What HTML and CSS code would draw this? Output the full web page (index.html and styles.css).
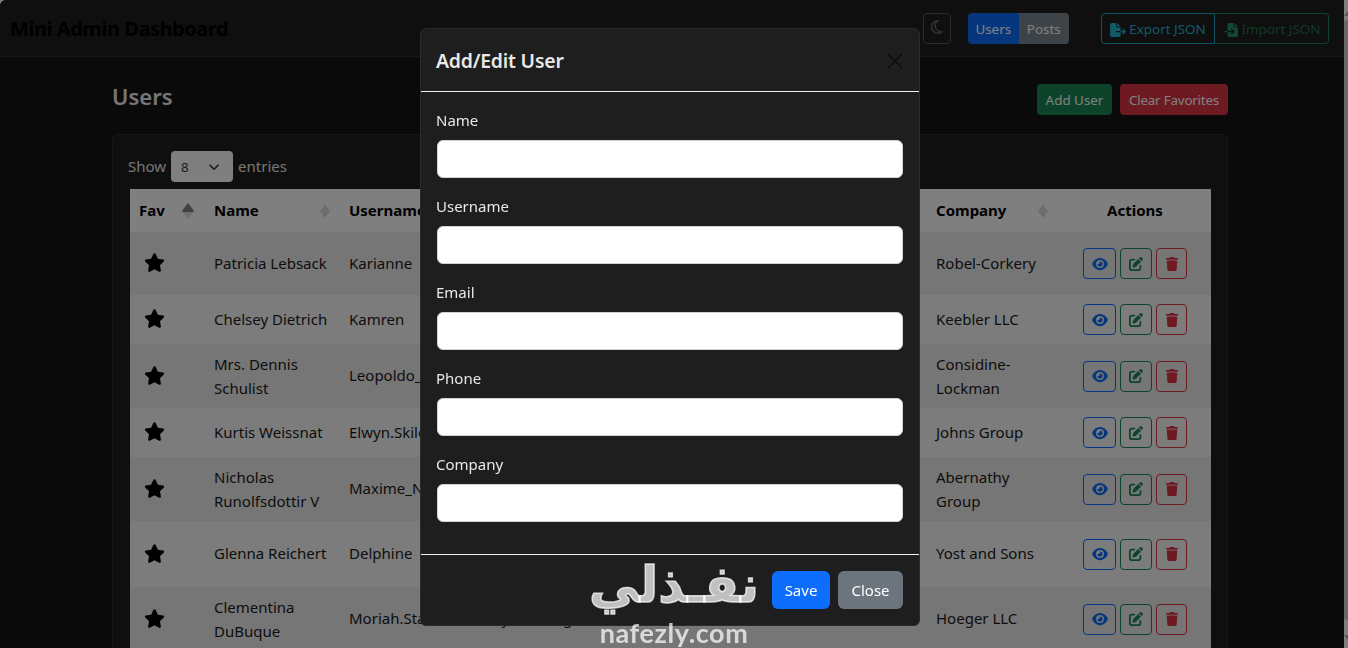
FILE: index.html
```html
<!DOCTYPE html>
<html lang="en">
<head>
    <meta charset="UTF-8">
    <meta name="viewport" content="width=device-width, initial-scale=1.0">
    <title>Mini Admin Dashboard</title>
    <link rel="stylesheet" href="styles.css">
</head>
<body>
    <svg class="sprite" xmlns="http://www.w3.org/2000/svg">
        <symbol id="i-eye" viewBox="0 0 576 512"><path d="M288 32c-80.800 0-145.500 36.800-192.600 80.600C48.600 156 17.300 208 2.500 243.700c-3.300 7.900-3.300 16.700 0 24.600C17.300 304 48.600 356 95.400 399.400C142.500 443.200 207.200 480 288 480s145.500-36.800 192.600-80.600c46.800-43.500 78.100-95.400 93-131.100c3.300-7.900 3.300-16.700 0-24.600c-14.900-35.700-46.200-87.700-93-131.100C433.500 68.800 368.800 32 288 32zM144 256a144 144 0 1 1 288 0 144 144 0 1 1 -288 0zm144-64c0 35.300-28.700 64-64 64c-7.100 0-13.900-1.200-20.300-3.300c-5.500-1.800-11.900 1.600-11.700 7.400c.3 6.900 1.300 13.800 3.200 20.700c13.700 51.200 66.400 81.600 117.600 67.900s81.600-66.400 67.900-117.600c-11.100-41.500-47.800-69.400-88.600-71.100c-5.800-.2-9.200 6.100-7.400 11.700c2.100 6.400 3.300 13.200 3.300 20.300z"/></symbol>
        <symbol id="i-edit" viewBox="0 0 512 512"><path d="M471.600 21.700c-21.900-21.900-57.300-21.900-79.200 0L362.300 51.700l97.900 97.900 30.100-30.100c21.900-21.900 21.900-57.300 0-79.200L471.600 21.700zm-299.200 220c-6.100 6.100-10.800 13.600-13.500 21.900l-29.600 88.800c-2.900 8.600-.6 18.100 5.800 24.600s15.900 8.700 24.600 5.800l88.800-29.600c8.200-2.700 15.700-7.400 21.900-13.500L437.700 172.300 339.700 74.300 172.400 241.700zM96 64C43 64 0 107 0 160V416c0 53 43 96 96 96H352c53 0 96-43 96-96V320c0-17.700-14.300-32-32-32s-32 14.300-32 32v96c0 17.700-14.300 32-32 32H96c-17.700 0-32-14.300-32-32V160c0-17.700 14.300-32 32-32h96c17.700 0 32-14.300 32-32s-14.300-32-32-32H96z"/></symbol>
        <symbol id="i-trash" viewBox="0 0 448 512"><path d="M135.200 17.700L128 32H32C14.300 32 0 46.300 0 64S14.300 96 32 96H416c17.700 0 32-14.300 32-32s-14.300-32-32-32H320l-7.200-14.300C307.400 6.800 296.300 0 284.200 0H163.800c-12.100 0-23.200 6.800-28.600 17.700zM416 128H32L53.200 467c1.600 25.300 22.600 45 47.900 45H346.900c25.300 0 46.300-19.700 47.900-45L416 128z"/></symbol>
        <symbol id="i-star" viewBox="0 0 576 512"><path d="M316.900 18C311.600 7 300.400 0 288.100 0s-23.400 7-28.800 18L195 150.300 51.400 171.500c-12 1.800-22 10.200-25.700 21.700s-.7 24.200 7.900 32.700L137.800 329 113.200 474.700c-2 12 3 24.200 12.900 31.300s23 8 33.800 2.300l128.300-68.500 128.300 68.500c10.800 5.700 23.900 4.900 33.800-2.300s14.900-19.300 12.900-31.300L438.500 329 542.700 225.900c8.600-8.500 11.700-21.200 7.900-32.700s-13.700-19.900-25.700-21.700L381.200 150.300 316.900 18z"/></symbol>
        <symbol id="i-moon" viewBox="0 0 384 512"><path d="M144.700 98.700c-21 34.100-33.100 74.300-33.100 117.300c0 98 62.800 181.400 150.400 211.700c-12.400 2.800-25.300 4.300-38.600 4.300C126.600 432 48 353.300 48 256c0-68.900 39.400-128.400 96.800-157.300zm62.100-66C91.100 41.200 0 137.900 0 256C0 379.700 100 480 223.500 480c47.800 0 92-15 128.400-40.600c1.900-1.300 3.700-2.700 5.500-4c4.800-3.600 9.400-7.400 13.900-11.400c2.700-2.400 5.300-4.800 7.900-7.300c5-4.900 6.300-12.500 3.100-18.700s-10.100-9.700-17-8.500c-3.700 .6-7.400 1.200-11.100 1.600c-5 .5-10.100 .9-15.300 1c-1.200 0-2.500 0-3.700 0c-.1 0-.2 0-.3 0c-96.800-.2-175.200-78.900-175.200-176c0-54.800 24.900-103.700 64.100-136c1-.9 2.100-1.700 3.200-2.600c4-3.200 8.200-6.200 12.500-9c3.100-2 6.300-4 9.600-5.800c6.100-3.500 9.200-10.500 7.700-17.300s-7.300-11.900-14.300-12.500c-3.600-.3-7.100-.5-10.700-.6c-2.700-.1-5.400-.1-8.100-.1c-3.300 0-6.500 .1-9.800 .2c-2.300 .1-4.600 .2-6.900 .4z"/></symbol>
        <symbol id="i-export" viewBox="0 0 576 512"><path d="M0 64C0 28.700 28.700 0 64 0H224V128c0 17.700 14.300 32 32 32H384V288H216c-13.300 0-24 10.700-24 24s10.700 24 24 24H384V448c0 35.300-28.700 64-64 64H64c-35.300 0-64-28.700-64-64V64zM384 336V288H494.100l-39-39c-9.400-9.400-9.400-24.600 0-33.900s24.600-9.400 33.900 0l80 80c9.400 9.400 9.400 24.600 0 33.900l-80 80c-9.400 9.400-24.600 9.400-33.900 0s-9.400-24.600 0-33.900l39-39H384zm0-208H256V0L384 128z"/></symbol>
        <symbol id="i-import" viewBox="0 0 512 512"><path d="M128 64c0-35.300 28.700-64 64-64H352V128c0 17.700 14.300 32 32 32H512V448c0 35.300-28.700 64-64 64H192c-35.300 0-64-28.700-64-64V336H302.100l-39 39c-9.400 9.400-9.400 24.600 0 33.900s24.600 9.400 33.900 0l80-80c9.400-9.400 9.400-24.600 0-33.900l-80-80c-9.400-9.400-24.600-9.400-33.900 0s-9.400 24.600 0 33.900l39 39H128V64zm0 224v48H24c-13.300 0-24-10.700-24-24s10.700-24 24-24H128zM512 128H384V0L512 128z"/></symbol>
    </svg>

    <div class="page">
        <nav class="navbar">
            <div class="brand">Mini Admin Dashboard</div>
            <button class="btn btn-moon"><svg class="icon"><use href="#i-moon"/></svg></button>
            <div class="btn-group tabs">
                <button class="btn btn-primary">Users</button>
                <button class="btn btn-secondary">Posts</button>
            </div>
            <div class="btn-group json">
                <button class="btn btn-export"><svg class="icon"><use href="#i-export"/></svg>Export JSON</button>
                <button class="btn btn-import"><svg class="icon"><use href="#i-import"/></svg>Import JSON</button>
            </div>
        </nav>

        <main class="content">
            <div class="page-head">
                <h2>Users</h2>
                <div class="page-actions">
                    <button class="btn btn-success">Add User</button>
                    <button class="btn btn-danger">Clear Favorites</button>
                </div>
            </div>

            <section class="card">
                <div class="length">
                    Show
                    <span class="select">8<svg class="chevron" viewBox="0 0 16 16"><path d="M2 5l6 6 6-6"/></svg></span>
                    entries
                </div>
                <table class="users">
                    <colgroup>
                        <col class="col-fav"><col class="col-name"><col class="col-user"><col class="col-email"><col class="col-phone"><col class="col-company"><col class="col-actions">
                    </colgroup>
                    <thead>
                        <tr>
                            <th>Fav<span class="sort asc"></span></th>
                            <th>Name<span class="sort"></span></th>
                            <th>Username<span class="sort"></span></th>
                            <th>Email<span class="sort"></span></th>
                            <th>Phone<span class="sort"></span></th>
                            <th>Company<span class="sort"></span></th>
                            <th class="center">Actions</th>
                        </tr>
                    </thead>
                    <tbody>
                        <tr class="row-lg">
                            <td><svg class="star"><use href="#i-star"/></svg></td>
                            <td>Patricia Lebsack</td><td>Karianne</td><td>Julianne.OConner@kory.org</td><td>493-170-9623</td><td>Robel-Corkery</td>
                            <td class="actions"><button class="act act-view"><svg><use href="#i-eye"/></svg></button><button class="act act-edit"><svg><use href="#i-edit"/></svg></button><button class="act act-del"><svg><use href="#i-trash"/></svg></button></td>
                        </tr>
                        <tr>
                            <td><svg class="star"><use href="#i-star"/></svg></td>
                            <td>Chelsey Dietrich</td><td>Kamren</td><td>Lucio_Hettinger@annie.ca</td><td>254-954-1289</td><td>Keebler LLC</td>
                            <td class="actions"><button class="act act-view"><svg><use href="#i-eye"/></svg></button><button class="act act-edit"><svg><use href="#i-edit"/></svg></button><button class="act act-del"><svg><use href="#i-trash"/></svg></button></td>
                        </tr>
                        <tr>
                            <td><svg class="star"><use href="#i-star"/></svg></td>
                            <td class="two">Mrs. Dennis Schulist</td><td>Leopoldo_Corkery</td><td>Karley_Dach@jasper.info</td><td>477-935-8478</td><td class="two">Considine-Lockman</td>
                            <td class="actions"><button class="act act-view"><svg><use href="#i-eye"/></svg></button><button class="act act-edit"><svg><use href="#i-edit"/></svg></button><button class="act act-del"><svg><use href="#i-trash"/></svg></button></td>
                        </tr>
                        <tr>
                            <td><svg class="star"><use href="#i-star"/></svg></td>
                            <td>Kurtis Weissnat</td><td>Elwyn.Skiles</td><td>Telly.Hoeger@billy.biz</td><td>210-067-6132</td><td>Johns Group</td>
                            <td class="actions"><button class="act act-view"><svg><use href="#i-eye"/></svg></button><button class="act act-edit"><svg><use href="#i-edit"/></svg></button><button class="act act-del"><svg><use href="#i-trash"/></svg></button></td>
                        </tr>
                        <tr>
                            <td><svg class="star"><use href="#i-star"/></svg></td>
                            <td class="two">Nicholas Runolfsdottir V</td><td>Maxime_Nienow</td><td>Sherwood@rosamond.me</td><td>586-493-6943</td><td class="two">Abernathy Group</td>
                            <td class="actions"><button class="act act-view"><svg><use href="#i-eye"/></svg></button><button class="act act-edit"><svg><use href="#i-edit"/></svg></button><button class="act act-del"><svg><use href="#i-trash"/></svg></button></td>
                        </tr>
                        <tr class="row-xl">
                            <td><svg class="star"><use href="#i-star"/></svg></td>
                            <td>Glenna Reichert</td><td>Delphine</td><td>Chaim_McDermott@dana.io</td><td>775-976-6794</td><td>Yost and Sons</td>
                            <td class="actions"><button class="act act-view"><svg><use href="#i-eye"/></svg></button><button class="act act-edit"><svg><use href="#i-edit"/></svg></button><button class="act act-del"><svg><use href="#i-trash"/></svg></button></td>
                        </tr>
                        <tr>
                            <td><svg class="star"><use href="#i-star"/></svg></td>
                            <td class="two">Clementina DuBuque</td><td>Moriah.Stanton</td><td>Rey.Padberg@karina.biz</td><td>024-648-3804</td><td>Hoeger LLC</td>
                            <td class="actions"><button class="act act-view"><svg><use href="#i-eye"/></svg></button><button class="act act-edit"><svg><use href="#i-edit"/></svg></button><button class="act act-del"><svg><use href="#i-trash"/></svg></button></td>
                        </tr>
                    </tbody>
                </table>
            </section>
        </main>
    </div>

    <div class="scrollbar"><span class="arrow-up"></span><span class="thumb"></span><span class="arrow-down"></span></div>

    <div class="backdrop"></div>

    <div class="modal">
        <div class="modal-header">
            <h5>Add/Edit User</h5>
            <svg class="btn-close" viewBox="0 0 16 16"><path d="M1 1l14 14M15 1L1 15"/></svg>
        </div>
        <div class="modal-body">
            <label>Name</label><input type="text">
            <label>Username</label><input type="text">
            <label>Email</label><input type="text">
            <label>Phone</label><input type="text">
            <label>Company</label><input type="text">
        </div>
        <div class="modal-footer">
            <button class="btn btn-save">Save</button>
            <button class="btn btn-close-text">Close</button>
        </div>
    </div>

    <div class="watermark">
        <div class="wm-ar" dir="rtl" lang="ar">نفـذلي</div>
        <div class="wm-en">nafezly.com</div>
    </div>
</body>
</html>
```

FILE: styles.css
```css
* {
    box-sizing: border-box;
}
html, body {
    margin: 0;
    height: 648px;
    overflow: hidden;
    background: #ffffff;
}
body {
    font-family: "Noto Sans", "Open Sans", Arial, sans-serif;
    font-size: 15px;
    line-height: 24px;
}
.sprite {
    display: none;
}
.page {
    width: 1344px;
    height: 648px;
    background: #141414;
    border-top-left-radius: 6px;
    overflow: hidden;
    color: #ececec;
}

/* top bar */
.navbar {
    display: flex;
    align-items: center;
    height: 57px;
    padding: 1px 15px 0 10px;
    background: #1e1e1e;
    border-bottom: 1px solid #2c2c2c;
}
.brand {
    flex: 1;
    color: #000000;
    font-size: 20px;
    font-weight: 700;
    letter-spacing: -0.45px;
}
.btn {
    height: 31px;
    padding: 2px 8px 0;
    border: 1px solid transparent;
    border-radius: 4px;
    font-family: inherit;
    font-size: 13.4px;
    line-height: 1;
    color: #ffffff;
    white-space: nowrap;
}
.icon {
    width: 16px;
    height: 14px;
    fill: currentColor;
}
.btn-moon {
    width: 28px;
    height: 31px;
    padding: 0;
    margin-right: 17px;
    background: none;
    border-color: #585858;
    color: #646464;
}
.btn-moon .icon {
    height: 16px;
}
.btn-group {
    display: flex;
}
.btn-group .btn:first-child {
    border-radius: 4px 0 0 4px;
}
.btn-group .btn:last-child {
    border-radius: 0 4px 4px 0;
}
.tabs {
    margin-right: 32px;
}
.tabs .btn {
    width: 50.5px;
    padding: 2px 0 0;
}
.btn-primary {
    background: #0d6efd;
}
.btn-secondary {
    background: #7d868e;
}
.btn-export, .btn-import {
    display: flex;
    align-items: center;
    justify-content: center;
    gap: 3px;
    width: 114px;
    padding: 2px 0 0;
    background: none;
}
.btn-export {
    border-color: #1ba8c4;
    color: #20b4d2;
}
.btn-import {
    border-color: #198754;
    border-left: 0;
    color: #20714e;
}
.btn-import .icon {
    color: #1f9560;
}

/* page */
.content {
    padding: 25px 116px 0 112px;
}
.page-head {
    display: flex;
    justify-content: space-between;
    height: 33px;
    margin-bottom: 19px;
}
.page-head h2 {
    margin: 0;
    font-size: 22px;
    line-height: 28px;
    font-weight: 600;
}
.page-actions {
    display: flex;
    gap: 8px;
    margin-top: 2px;
}
.btn-success {
    width: 75px;
    padding: 2px 0 0;
    background: #198754;
}
.btn-danger {
    width: 108px;
    padding: 2px 0 0;
    background: #dc3545;
    letter-spacing: -0.2px;
}
.card {
    height: 600px;
    padding: 16px;
    background: #1e1e1e;
    border: 1px solid #2c2c2c;
    border-radius: 6px;
}
.length {
    display: flex;
    align-items: flex-start;
    gap: 4px;
    height: 31px;
    margin-bottom: 7px;
    margin-left: -1px;
    line-height: 30px;
}
.select {
    display: flex;
    align-items: center;
    justify-content: space-between;
    width: 62px;
    height: 31px;
    margin: 0 1px;
    padding: 0 13px 0 10px;
    background: #ffffff;
    border-radius: 4px;
    color: #3a3a3a;
    font-size: 13.4px;
}
.chevron {
    width: 12px;
    height: 12px;
    fill: none;
    stroke: #2e2e2e;
    stroke-width: 2;
}

/* table */
.users {
    width: 1081px;
    margin-left: 1px;
    table-layout: fixed;
    border-collapse: collapse;
    color: #1a1a1a;
}
.col-fav { width: 75px; }
.col-name { width: 135px; }
.col-user { width: 135px; }
.col-email { width: 260px; }
.col-phone { width: 192px; }
.col-company { width: 138px; }
.col-actions { width: 146px; }
.users th {
    position: relative;
    height: 43px;
    padding: 7px 9px 9px;
    background: #ffffff;
    color: #000000;
    font-size: 15px;
    font-weight: 700;
    text-align: left;
    white-space: nowrap;
}
.users th.center {
    padding-right: 15px;
    text-align: center;
}
.users td {
    padding: 7px 8px 9px 9px;
    vertical-align: middle;
    overflow: hidden;
}
.users td.two {
    padding-top: 8px;
    padding-bottom: 8px;
}
.users td:nth-child(6) {
    padding-right: 14px;
}
.users tbody tr {
    height: 49px;
    background: #f8f8f8;
}
.users tbody tr:nth-child(odd) {
    background: #ececec;
}
.users tbody tr.row-lg {
    height: 63px;
}
.users tbody tr.row-xl {
    height: 66px;
}
.sort {
    position: absolute;
    top: 15px;
    right: 10px;
    width: 10px;
    height: 14px;
    background: #dddddd;
    clip-path: polygon(50% 0, 100% 50%, 50% 100%, 0 50%);
}
.users th:nth-child(6) .sort {
    right: 17px;
}
.sort.asc {
    top: 14px;
    right: 11px;
    width: 12px;
    height: 16px;
    background: linear-gradient(#808080 55%, #dddddd 55%);
}
.star {
    display: block;
    width: 21px;
    height: 19px;
    margin-left: 5px;
    fill: #000000;
}
.users td.actions {
    padding: 8px 0 8px 18px;
    white-space: nowrap;
    font-size: 0;
}
.act {
    width: 32px;
    height: 31px;
    padding: 0;
    margin-right: 4px;
    background: none;
    border: 1px solid;
    border-radius: 4px;
    vertical-align: middle;
}
.act svg {
    display: block;
    width: 16px;
    height: 14px;
    margin: 0 auto;
    fill: currentColor;
}
.act-view {
    width: 33px;
    color: #0d6efd;
}
.act-edit {
    color: #198754;
}
.act-del {
    width: 31px;
    color: #dc3545;
}

/* fake scrollbar */
.scrollbar {
    position: absolute;
    top: 0;
    right: 0;
    width: 4px;
    height: 648px;
    background: #ffffff;
    z-index: 5;
}
.arrow-up, .arrow-down {
    position: absolute;
    right: 0;
    width: 4px;
    height: 5px;
    background: #b0b0b0;
}
.arrow-up {
    top: 11px;
    clip-path: polygon(100% 0, 100% 100%, 0 100%);
}
.arrow-down {
    bottom: 8px;
    clip-path: polygon(100% 100%, 100% 0, 0 0);
}
.thumb {
    position: absolute;
    top: 20px;
    right: 0;
    width: 4px;
    height: 600px;
    background: #d0d0d0;
    border-radius: 3px 0 0 3px;
}

/* modal */
.backdrop {
    position: fixed;
    inset: 0;
    background: rgba(0, 0, 0, 0.5);
    z-index: 10;
}
.modal {
    position: fixed;
    top: 28px;
    left: 420px;
    width: 500px;
    height: 598px;
    display: flex;
    flex-direction: column;
    background: #1e1e1e;
    border: 1px solid #2a2a2a;
    border-radius: 6px;
    color: #e8e8e8;
    z-index: 11;
}
.modal-header {
    display: flex;
    align-items: center;
    justify-content: space-between;
    height: 63px;
    padding: 2px 16px 0 15px;
    border-bottom: 1px solid #f0f0f0;
}
.modal-header h5 {
    margin: 0;
    font-size: 19.4px;
    font-weight: 600;
    letter-spacing: -0.2px;
}
.btn-close {
    width: 16px;
    height: 16px;
    fill: none;
    stroke: #0c0c0c;
    stroke-width: 1.4;
}
.modal-body {
    display: flex;
    flex-direction: column;
    height: 463px;
    padding: 16px 16px 0 16px;
    border-bottom: 1px solid #f0f0f0;
}
.modal-body label {
    display: block;
    height: 24px;
    margin: 0 0 8px -1px;
    font-size: 15px;
}
.modal-body input {
    width: 466px;
    height: 38px;
    flex: none;
    margin-bottom: 16px;
    background: #ffffff;
    border: 1px solid #ced4da;
    border-radius: 6px;
}
.modal-footer {
    display: flex;
    justify-content: flex-end;
    gap: 8px;
    padding: 16px;
}
.btn-save, .btn-close-text {
    height: 38px;
    padding: 0;
    border-radius: 6px;
    font-size: 15px;
}
.btn-save {
    width: 58px;
    background: #0d6efd;
}
.btn-close-text {
    width: 65px;
    background: #6c757d;
}

/* watermark */
.watermark {
    position: absolute;
    top: 552px;
    left: 585px;
    width: 178px;
    text-align: center;
    color: rgba(255, 255, 255, 0.72);
    z-index: 12;
}
.wm-ar {
    height: 66px;
    font-family: "DejaVu Sans", sans-serif;
    font-size: 50px;
    font-weight: 700;
    line-height: 66px;
    -webkit-text-stroke: 1.5px rgba(255, 255, 255, 0.72);
}
.wm-en {
    font-family: "Lato", sans-serif;
    font-size: 27px;
    font-weight: 700;
    line-height: 30px;
    letter-spacing: 0.6px;
}
```
